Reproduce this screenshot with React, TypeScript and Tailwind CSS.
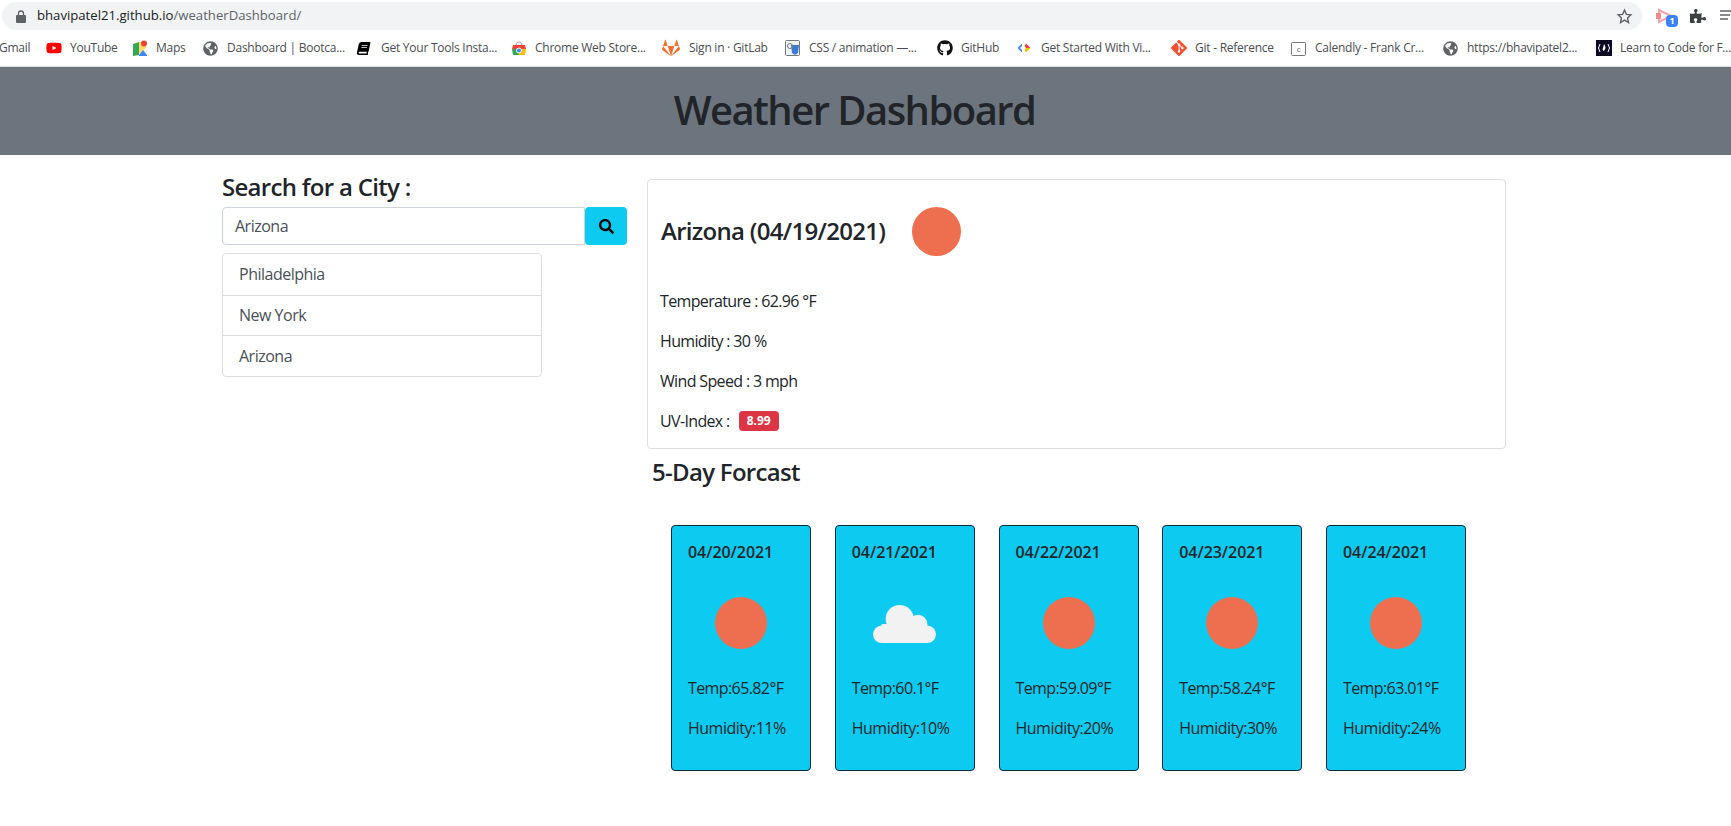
import { FaPuzzlePiece, FaGithub, FaGitlab, FaYoutube, FaGlobeAmericas, FaBook, FaSearch } from 'react-icons/fa'
import { SiGit } from 'react-icons/si'
import type { ReactNode } from 'react'

const font = { fontFamily: '"Open Sans", sans-serif' }

const bookmarks: { label: string; width: number; icon: ReactNode; iconWidth?: number }[] = [
  { label: 'YouTube', width: 86, icon: <FaYoutube className="text-[16px] text-[#f00]" /> },
  {
    label: 'Maps',
    width: 71,
    icon: (
      <svg width="16" height="17" viewBox="0 0 16 17">
        <path d="M1 4l6-2v13l-6 1z" fill="#34a853" />
        <path d="M7 2l7 1v5L7 15z" fill="#fbdb6c" />
        <path d="M7 15l4-5 4 5v1H7z" fill="#4285f4" />
        <circle cx="12" cy="3.500" r="3" fill="#ea4335" />
      </svg>
    ),
  },
  { label: 'Dashboard | Bootca...', width: 154, icon: <FaGlobeAmericas className="text-[15px] text-[#5f6368]" /> },
  { label: 'Get Your Tools Insta...', width: 154, icon: <FaBook className="-skew-x-12 text-[13px] text-black" /> },
  {
    label: 'Chrome Web Store...',
    width: 151,
    icon: (
      <svg width="16" height="16" viewBox="0 0 16 16">
        <path d="M5 5c0-4 6-4 6 0" fill="none" stroke="#999" />
        <path d="M2 5h12l1 4H1z" fill="#ea4335" />
        <path d="M1 9h7v6H2z" fill="#34a853" />
        <path d="M8 9h7l-1 6H8z" fill="#fbbc04" />
        <circle cx="8" cy="10.500" r="2.500" fill="#4285f4" stroke="#fff" />
      </svg>
    ),
  },
  { label: 'Sign in · GitLab', width: 123, iconWidth: 27, icon: <FaGitlab className="text-[18px] text-[#f0702c]" /> },
  {
    label: 'CSS / animation —...',
    width: 152,
    icon: (
      <svg width="15" height="16" viewBox="0 0 15 16">
        <rect x="0.500" y="0.500" width="14" height="15" rx="1" fill="#eef2f7" stroke="#777" />
        <path d="M6 5h8l-1 8-3 2-3-2z" fill="#3b7bd4" />
        <circle cx="5" cy="6" r="2.500" fill="none" stroke="#777" />
      </svg>
    ),
  },
  { label: 'GitHub', width: 80, icon: <FaGithub className="text-[16px] text-[#111]" /> },
  {
    label: 'Get Started With Vi...',
    width: 154,
    icon: (
      <svg width="14" height="10" viewBox="0 0 14 10">
        <path d="M5 0.500L0.500 5 5 9.500V7L3 5l2-2z" fill="#4285f4" />
        <path d="M9 0.500L13.500 5H9L7.500 3z" fill="#ea4335" />
        <path d="M9 9.500L13.500 5H9L7.500 7z" fill="#fbbc04" />
      </svg>
    ),
  },
  { label: 'Git - Reference', width: 120, icon: <SiGit className="text-[16px] text-[#f05133]" /> },
  {
    label: 'Calendly - Frank Cr...',
    width: 152,
    icon: (
      <svg width="15" height="15" viewBox="0 0 15 15">
        <rect x="0.500" y="1.500" width="14" height="13" rx="1" fill="#fff" stroke="#777" />
        <text x="7.500" y="11" fontSize="8" textAnchor="middle" fill="#666">c</text>
      </svg>
    ),
  },
  { label: 'https://bhavipatel2...', width: 153, icon: <FaGlobeAmericas className="text-[15px] text-[#5f6368]" /> },
  {
    label: 'Learn to Code for F...',
    width: 135,
    icon: (
      <svg width="16" height="16" viewBox="0 0 16 16">
        <rect width="16" height="16" fill="#0a0a23" />
        <path d="M4 4L2.500 8 4 12M12 4l1.500 4L12 12" fill="none" stroke="#fff" />
        <path d="M8 4c2 3 2 4 0 7-1-1-2-1-1-3" fill="#fff" />
      </svg>
    ),
  },
]

const forecast = [
  { date: '04/20/2021', temp: '65.82', humidity: '11', cloud: false },
  { date: '04/21/2021', temp: '60.1', humidity: '10', cloud: true },
  { date: '04/22/2021', temp: '59.09', humidity: '20', cloud: false },
  { date: '04/23/2021', temp: '58.24', humidity: '30', cloud: false },
  { date: '04/24/2021', temp: '63.01', humidity: '24', cloud: false },
]

function BrowserBar() {
  return (
    <div className="h-[67px] border-b border-[#dadce0] bg-white">
      <div className="flex h-[30px] items-center overflow-hidden pt-[2px]">
        <div className="ml-[2px] flex h-[28px] w-[1640px] shrink-0 items-center rounded-full bg-[#f1f3f4] pl-[13px] pr-[9px]">
          <svg width="12" height="13" viewBox="0 0 12 13" className="text-[#5f6368]">
            <path d="M2 5h8a1 1 0 0 1 1 1v6a1 1 0 0 1-1 1H2a1 1 0 0 1-1-1V6a1 1 0 0 1 1-1z" fill="currentColor" />
            <path d="M3.500 5V3.500a2.500 2.500 0 0 1 5 0V5" fill="none" stroke="currentColor" strokeWidth="1.300" />
          </svg>
          <div className="ml-[10px] text-[13.15px] text-[#202124]">
            bhavipatel21.github.io<span className="text-[#5f6368]">/weatherDashboard/</span>
          </div>
          <svg width="17" height="17" viewBox="0 0 24 24" className="ml-auto text-[#5f6368]">
            <path d="M12 3l2.700 6 6.300.7-4.700 4.300 1.300 6.500L12 17.200 6.400 20.500l1.300-6.500L3 9.700 9.300 9z" fill="none" stroke="currentColor" strokeWidth="2" />
          </svg>
        </div>
        <div className="relative ml-[14px] h-[16px] w-[20px] shrink-0">
          <svg width="18" height="16" viewBox="0 0 18 16">
            <path d="M3 2l12 6-12 6z" fill="none" stroke="#f4a3a8" strokeWidth="2" />
            <rect x="0" y="5" width="5" height="6" fill="#f08a90" />
          </svg>
          <span className="absolute left-[10px] top-[7px] flex h-[12px] w-[12px] items-center justify-center rounded-sm bg-[#3b82f6] text-[9px] font-bold text-white">1</span>
        </div>
        <FaPuzzlePiece className="ml-[14px] shrink-0 text-[16px] text-[#3c4043]" />
        <svg width="18" height="12" viewBox="0 0 18 12" className="ml-[14px] shrink-0 text-[#5f6368]">
          <path d="M0 1h16M0 5h10M0 9h8" stroke="currentColor" strokeWidth="1.500" />
          <circle cx="15" cy="9" r="3" fill="currentColor" />
        </svg>
      </div>
      <div className="flex h-[36px] items-center overflow-hidden whitespace-nowrap text-[12px] tracking-[-0.25px] text-[#4a4d51]">
        <div className="w-[46px] shrink-0 -translate-x-[1px]">Gmail</div>
        {bookmarks.map((bookmark) => (
          <div key={bookmark.label} className="flex shrink-0 items-center" style={{ width: bookmark.width }}>
            <div className="flex shrink-0 items-center" style={{ width: bookmark.iconWidth ?? 24 }}>
              {bookmark.icon}
            </div>
            <span>{bookmark.label}</span>
          </div>
        ))}
      </div>
    </div>
  )
}

function Sun({ size }: { size: 'lg' | 'md' }) {
  return <div className={`rounded-full bg-[#ed6f4f] ${size === 'lg' ? 'h-[49px] w-[49px]' : 'h-[52px] w-[52px]'}`} />
}

function Cloud() {
  return (
    <svg width="63" height="39" viewBox="0 0 63 39" fill="#f2f2f2">
      <circle cx="8.700" cy="30.300" r="8.700" />
      <circle cx="26.700" cy="15" r="14" />
      <circle cx="45" cy="20" r="9.300" />
      <circle cx="54.300" cy="30.300" r="8.700" />
      <rect x="8.700" y="20" width="45.600" height="19" />
    </svg>
  )
}

function ForecastCard({ date, temp, humidity, cloud }: (typeof forecast)[number]) {
  return (
    <div className="h-[246px] w-[140px] rounded-[4px] border border-[#0b2a3a] bg-[#0dcaf0] px-[16px] pt-[14px] text-[#212529]">
      <div className="text-[16px] font-semibold leading-[24px] tracking-[-0.05px]">{date}</div>
      <div className="mt-[33px] flex h-[52px] items-center justify-center">{cloud ? <Cloud /> : <Sun size="md" />}</div>
      <p className="mt-[27px] text-[16px] leading-[24px] tracking-[-0.6px]">Temp:{temp}°F</p>
      <p className="mt-[16px] text-[16px] leading-[24px] tracking-[-0.5px]">Humidity:{humidity}%</p>
    </div>
  )
}

export default function App() {
  return (
    <div className="min-h-[826px] bg-white text-[#212529]" style={font}>
      <BrowserBar />
      <header className="flex h-[88px] items-center justify-center bg-[#6c757d] pb-[3px] pr-[22px]">
        <h1 className="text-[40px] font-semibold leading-[48px] tracking-[-1.55px]">Weather Dashboard</h1>
      </header>

      <main className="ml-[222px] flex w-[1284px] items-start">
        <section className="mt-[17px] w-[405px]">
          <h4 className="text-[24px] font-semibold leading-[29px] tracking-[-0.7px]">Search for a City :</h4>
          <div className="mt-[6px] flex h-[38px]">
            <div className="flex flex-1 items-center rounded-l-[4px] border border-[#ced4da] pl-[12px] text-[16px] tracking-[-0.5px] text-[#495057]">
              Arizona
            </div>
            <button type="button" className="flex w-[42px] items-center justify-center rounded-[4px] bg-[#0dcaf0] text-black">
              <FaSearch className="text-[15px]" />
            </button>
          </div>
          <ul className="mt-[8px] w-[320px] rounded-[4px] border border-[#dfdfdf] text-[16px] tracking-[-0.5px] text-[#495057]">
            {['Philadelphia', 'New York', 'Arizona'].map((city, index) => (
              <li key={city} className={`flex h-[40.5px] items-center pl-[16px] ${index > 0 ? 'border-t border-[#dfdfdf]' : ''}`}>
                {city}
              </li>
            ))}
          </ul>
        </section>

        <section className="ml-[20px] mt-[24px] flex-1">
          <div className="h-[270px] rounded-[4px] border border-[#dfdfdf] px-[13px]">
            <div className="flex h-[101px] items-center">
              <h2 className="text-[24px] font-semibold leading-[29px] tracking-[-0.7px]">Arizona (04/19/2021)</h2>
              <div className="ml-[27px] mt-[1px]">
                <Sun size="lg" />
              </div>
            </div>
            <div className="-ml-px mt-[8px] flex flex-col gap-[16px] text-[16px] leading-[24px] tracking-[-0.65px]">
              <p>Temperature : 62.96 °F</p>
              <p>Humidity : 30 %</p>
              <p>Wind Speed : 3 mph</p>
              <p className="flex items-center">
                UV-Index :
                <span className="ml-[9px] flex h-[20px] w-[40px] items-center justify-center rounded-[4px] bg-[#dc3545] text-[12px] font-bold tracking-normal text-white">
                  8.99
                </span>
              </p>
            </div>
          </div>
          <h4 className="ml-[5px] mt-[8px] text-[24px] font-semibold leading-[29px] tracking-[-0.7px]">5-Day Forcast</h4>
          <div className="ml-[24px] mt-[39px] flex gap-[23.75px]">
            {forecast.map((day) => (
              <ForecastCard key={day.date} {...day} />
            ))}
          </div>
        </section>
      </main>
    </div>
  )
}
